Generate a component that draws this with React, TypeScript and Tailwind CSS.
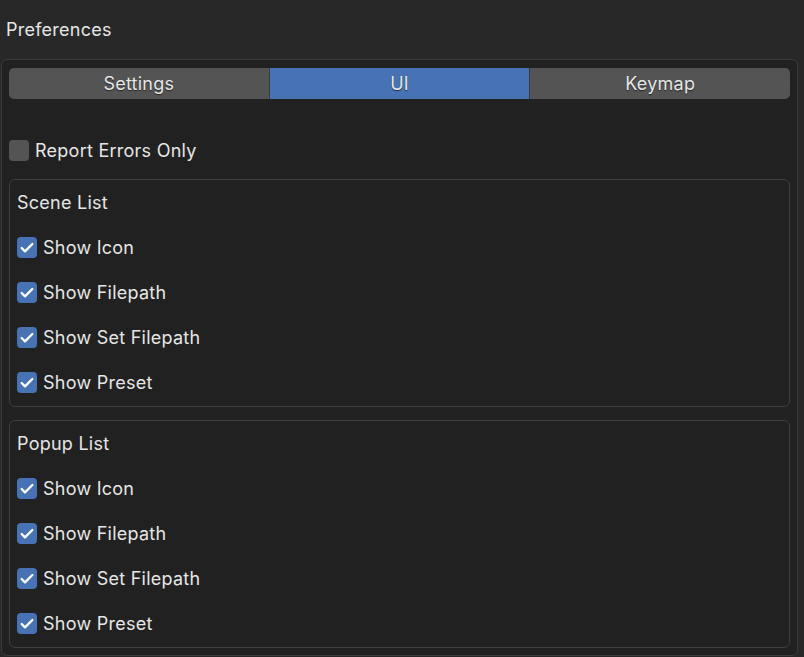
import { Check } from "lucide-react";

const FONT = { fontFamily: "Inter, 'Noto Sans', sans-serif", letterSpacing: "0.25px" };

function CheckRow({ label, checked = true }: { label: string; checked?: boolean }) {
  return (
    <div className="flex h-[45px] items-center gap-[6px]">
      {checked ? (
        <span className="flex h-[21px] w-[20px] items-center justify-center rounded-[4px] bg-[#4772b3]">
          <Check className="h-[16px] w-[16px] text-white" strokeWidth={3.5} />
        </span>
      ) : (
        <span className="h-[21px] w-[20px] rounded-[4px] bg-[#545454]" />
      )}
      <span className="text-[18px] text-[#e6e6e6]">{label}</span>
    </div>
  );
}

function Section({ title }: { title: string }) {
  const items = ["Show Icon", "Show Filepath", "Show Set Filepath", "Show Preset"];
  return (
    <div className="rounded-[6px] border border-[#3d3d3d] px-[7px] pb-[1px]">
      <div className="flex h-[45px] items-center pb-[1px] text-[18px] text-[#e6e6e6]">{title}</div>
      {items.map((it) => (
        <CheckRow key={it} label={it} />
      ))}
    </div>
  );
}

export default function App() {
  const tabs = ["Settings", "UI", "Keymap"];
  return (
    <div className="h-[657px] w-[804px] overflow-hidden bg-[#282828]" style={FONT}>
      <div className="flex h-[59px] items-center px-[6px] text-[18px] text-[#e6e6e6]">
        Preferences
      </div>
      <div className="ml-[1px] mr-[6px] h-[597px] rounded-[6px] border border-[#3a3a3a] bg-[#212121] px-[7px] pt-[8px]">
        <div className="flex h-[31px] overflow-hidden rounded-[5px]">
          {tabs.map((t, i) => (
            <div
              key={t}
              className={`flex flex-1 items-center justify-center pb-[1px] text-[18px] text-[#e6e6e6] [text-shadow:0_1px_1px_rgba(0,0,0,0.6)] ${
                t === "UI" ? "bg-[#4772b3]" : "bg-[#545454]"
              } ${i > 0 ? "border-l border-[#3a3a3a]" : ""}`}
            >
              {t}
            </div>
          ))}
        </div>
        <div className="mt-[40px] flex h-[22px] items-center gap-[6px]">
          <span className="h-[21px] w-[20px] rounded-[4px] bg-[#545454]" />
          <span className="text-[18px] text-[#e6e6e6]">Report Errors Only</span>
        </div>
        <div className="mt-[18px] flex flex-col gap-[13px]">
          <Section title="Scene List" />
          <Section title="Popup List" />
        </div>
      </div>
    </div>
  );
}
